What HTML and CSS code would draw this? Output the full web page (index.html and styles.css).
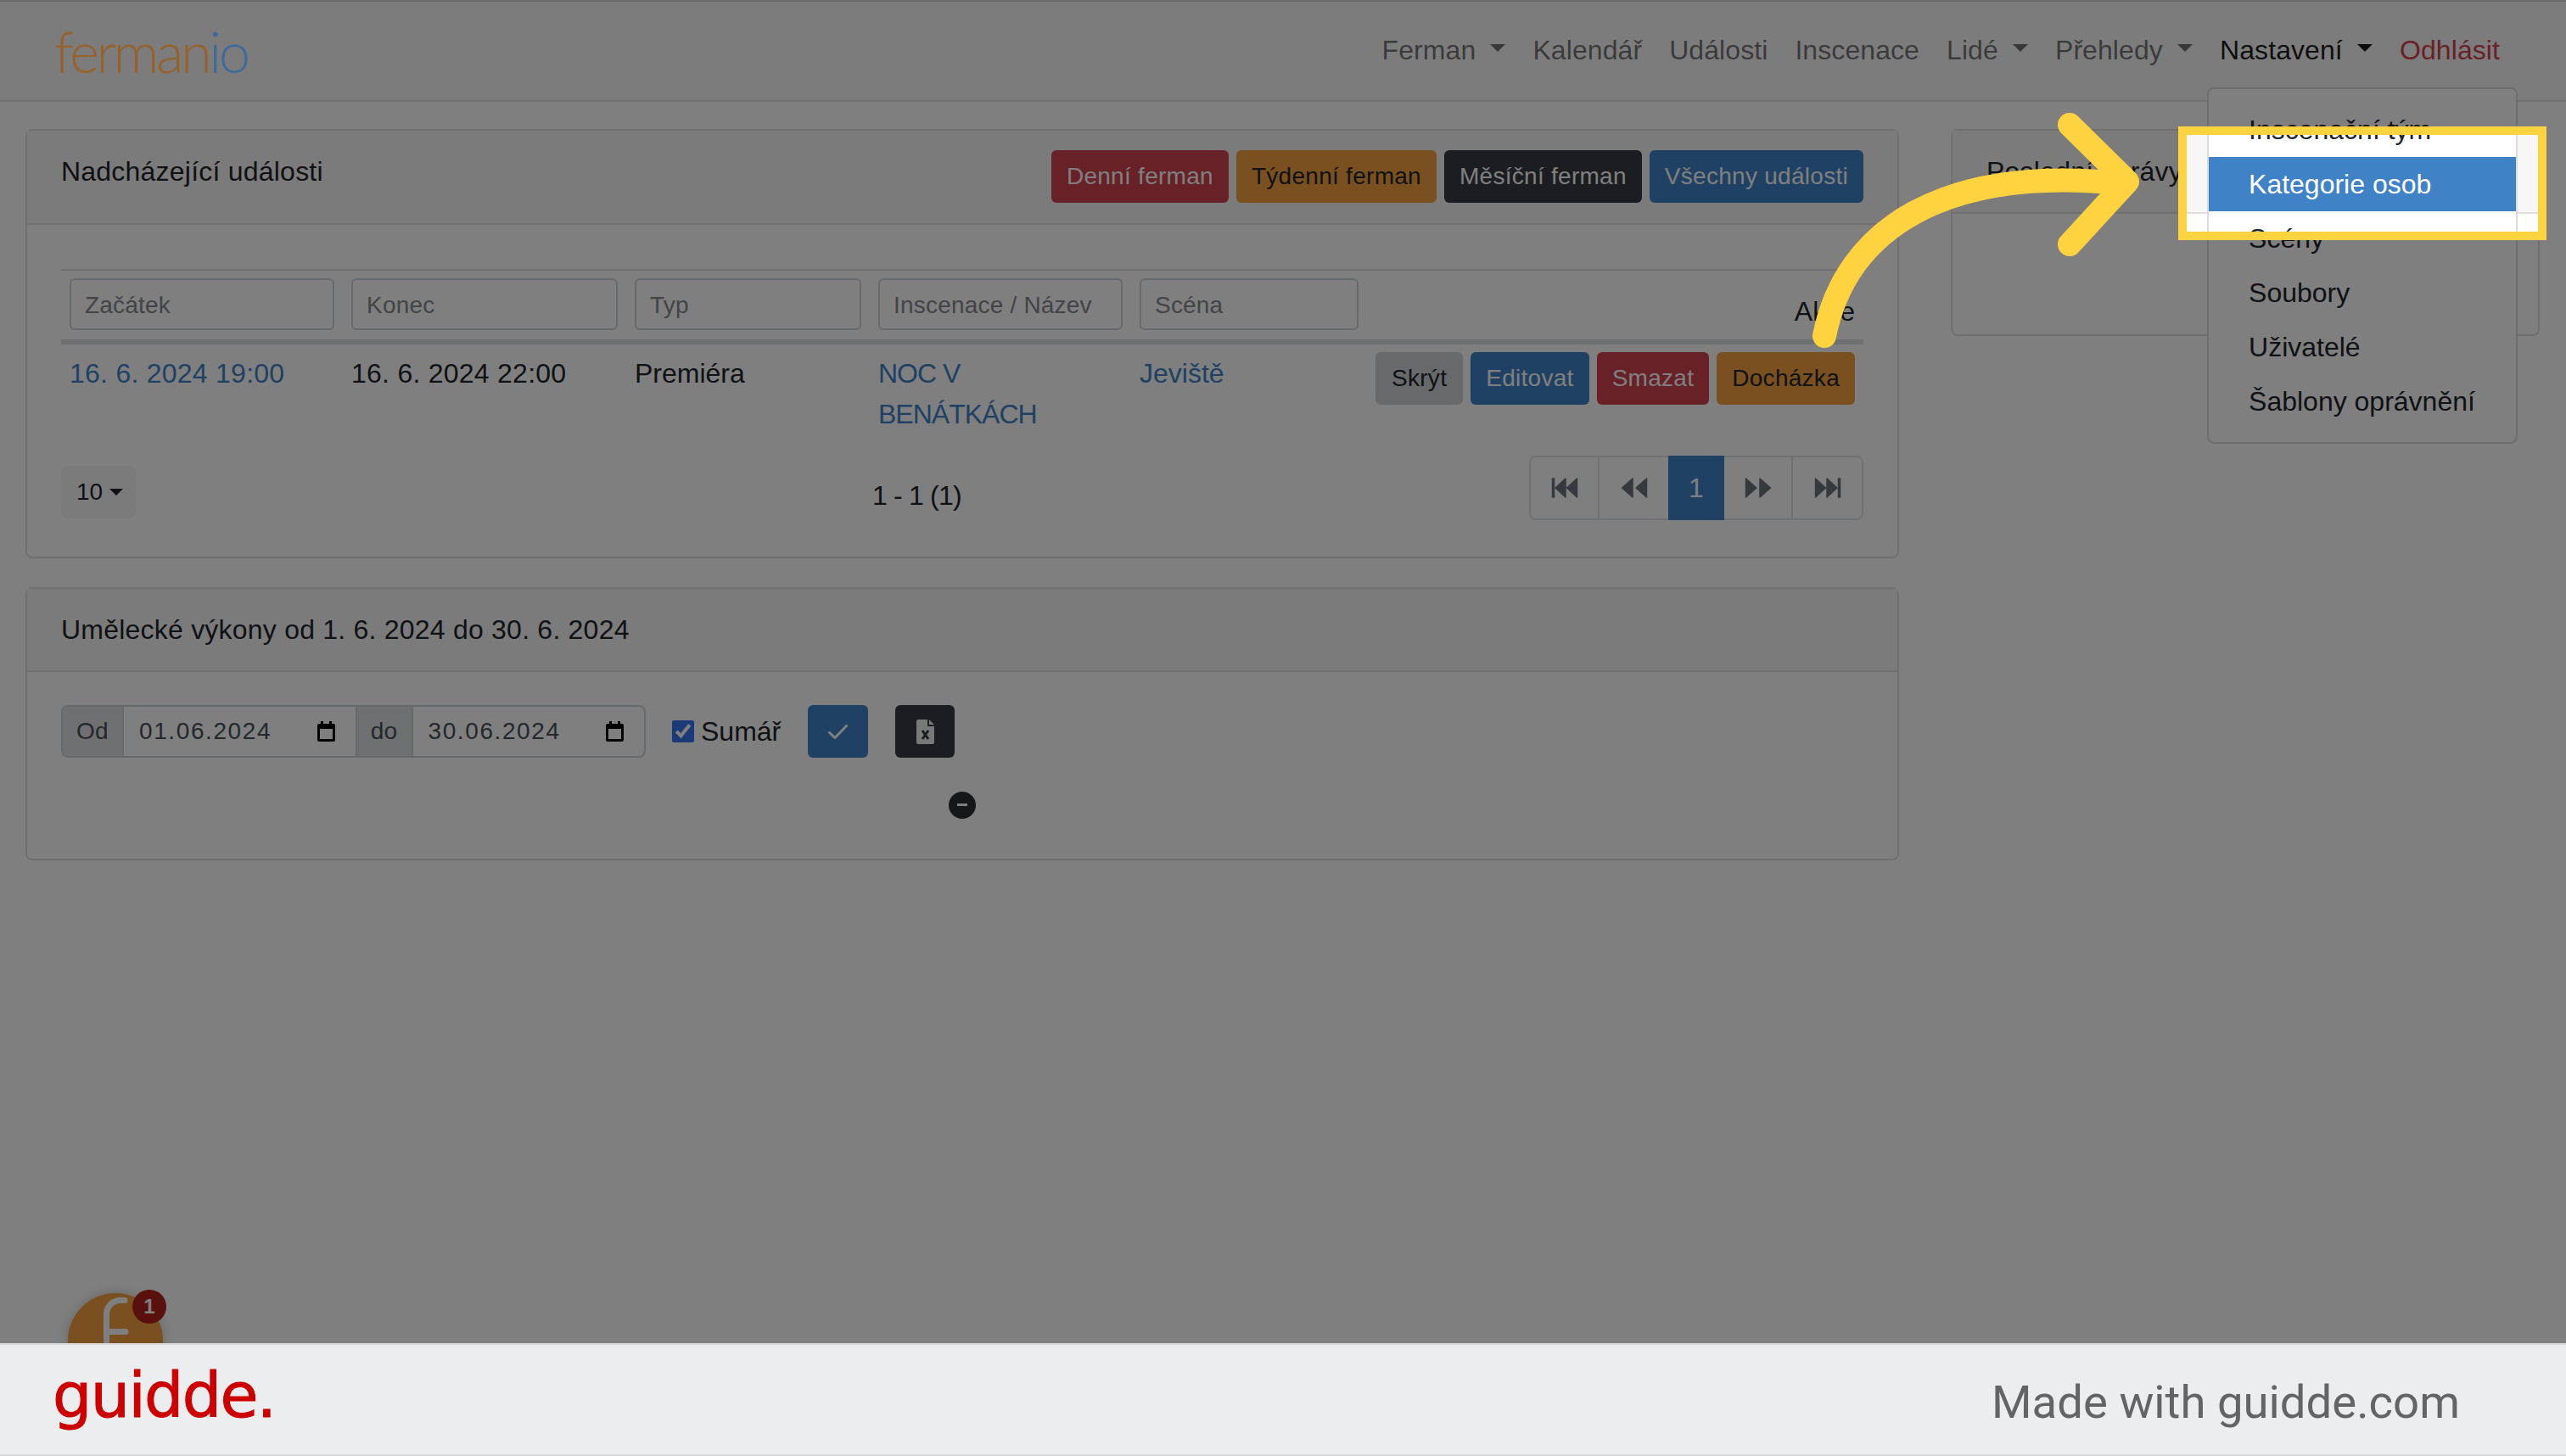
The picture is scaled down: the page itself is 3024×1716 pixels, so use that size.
FILE: index.html
```html
<!DOCTYPE html>
<html lang="en">
<head>
    <meta charset="UTF-8">
    <meta name="viewport" content="width=device-width, initial-scale=1.0">
    <title>Fermanio</title>
    <link rel="stylesheet" href="styles.css">
</head>
<body>
    <div class="page">
        <nav class="navbar">
            <a class="logo">ferman<span class="logo-io">io</span></a>
            <ul class="nav-list">
                <li><a class="nav-link">Ferman <span class="caret"></span></a></li>
                <li><a class="nav-link">Kalendář</a></li>
                <li><a class="nav-link">Události</a></li>
                <li><a class="nav-link">Inscenace</a></li>
                <li><a class="nav-link">Lidé <span class="caret"></span></a></li>
                <li><a class="nav-link">Přehledy <span class="caret"></span></a></li>
                <li class="nav-open">
                    <a class="nav-link nav-link-active">Nastavení <span class="caret"></span></a>
                    <div class="dropdown-menu">
                        <a class="dropdown-item">Inscenační tým</a>
                        <a class="dropdown-item dropdown-item-active">Kategorie osob</a>
                        <a class="dropdown-item">Scény</a>
                        <a class="dropdown-item">Soubory</a>
                        <a class="dropdown-item">Uživatelé</a>
                        <a class="dropdown-item">Šablony oprávnění</a>
                    </div>
                </li>
                <li><a class="nav-link nav-link-logout">Odhlásit</a></li>
            </ul>
        </nav>

        <main class="content">
            <div class="left-column">
                <section class="card">
                    <header class="card-header">
                        <span class="card-title">Nadcházející události</span>
                        <div class="btn-row">
                            <a class="btn btn-danger">Denní ferman</a>
                            <a class="btn btn-warning">Týdenní ferman</a>
                            <a class="btn btn-dark">Měsíční ferman</a>
                            <a class="btn btn-primary">Všechny události</a>
                        </div>
                    </header>
                    <div class="card-body events-body">
                        <table class="events-table">
                            <colgroup>
                                <col class="col-start">
                                <col class="col-end">
                                <col class="col-type">
                                <col class="col-name">
                                <col class="col-stage">
                                <col>
                            </colgroup>
                            <thead>
                                <tr>
                                    <th><input class="filter" placeholder="Začátek"></th>
                                    <th><input class="filter" placeholder="Konec"></th>
                                    <th><input class="filter" placeholder="Typ"></th>
                                    <th><input class="filter" placeholder="Inscenace / Název"></th>
                                    <th><input class="filter" placeholder="Scéna"></th>
                                    <th class="actions-head">Akce</th>
                                </tr>
                            </thead>
                            <tbody>
                                <tr>
                                    <td class="date-cell"><a class="link">16. 6. 2024 19:00</a></td>
                                    <td class="date-cell">16. 6. 2024 22:00</td>
                                    <td>Premiéra</td>
                                    <td class="name-cell"><a class="link">NOC V BENÁTKÁCH</a></td>
                                    <td><a class="link">Jeviště</a></td>
                                    <td class="actions-cell">
                                        <div class="btn-row btn-row-end">
                                            <a class="btn btn-light btn-hide">Skrýt</a>
                                            <a class="btn btn-primary">Editovat</a>
                                            <a class="btn btn-danger">Smazat</a>
                                            <a class="btn btn-warning">Docházka</a>
                                        </div>
                                    </td>
                                </tr>
                            </tbody>
                        </table>
                        <div class="table-footer">
                            <a class="page-size">10<span class="caret caret-small"></span></a>
                            <span class="page-count">1 - 1 (1)</span>
                            <div class="pagination">
                                <a class="page-item page-item-wide">
                                    <svg class="page-icon" viewBox="0 0 32 24"><path d="M1.500 1h2v22h-2zM5 12L17 1v22zM18.500 12L30.500 1v22z"/></svg>
                                </a>
                                <a class="page-item">
                                    <svg class="page-icon" viewBox="0 0 32 24"><path d="M1.500 12L14 1v22zM18 12L30.500 1v22z"/></svg>
                                </a>
                                <a class="page-item page-item-active">1</a>
                                <a class="page-item">
                                    <svg class="page-icon" viewBox="0 0 32 24"><path d="M1.500 1L14 12 1.500 23zM18 1L30.500 12 18 23z"/></svg>
                                </a>
                                <a class="page-item page-item-wide">
                                    <svg class="page-icon" viewBox="0 0 32 24"><path d="M1.500 1L13.500 12 1.500 23zM15 1L27 12 15 23zM28.500 1h2v22h-2z"/></svg>
                                </a>
                            </div>
                        </div>
                    </div>
                </section>

                <section class="card">
                    <header class="card-header">
                        <span class="card-title">Umělecké výkony od 1. 6. 2024 do 30. 6. 2024</span>
                    </header>
                    <div class="card-body report-body">
                        <form class="report-form">
                            <div class="input-group">
                                <span class="addon addon-from">Od</span>
                                <div class="date-field">
                                    <input class="date-input" value="01.06.2024">
                                    <svg class="calendar-icon" viewBox="0 0 21 24"><path d="M4 0h3v3h7V0h3v3h2a2 2 0 0 1 2 2v17a2 2 0 0 1-2 2H2a2 2 0 0 1-2-2V5a2 2 0 0 1 2-2h2zM3 9v12h15V9z"/></svg>
                                </div>
                                <span class="addon addon-to">do</span>
                                <div class="date-field">
                                    <input class="date-input" value="30.06.2024">
                                    <svg class="calendar-icon" viewBox="0 0 21 24"><path d="M4 0h3v3h7V0h3v3h2a2 2 0 0 1 2 2v17a2 2 0 0 1-2 2H2a2 2 0 0 1-2-2V5a2 2 0 0 1 2-2h2zM3 9v12h15V9z"/></svg>
                                </div>
                            </div>
                            <label class="sum-check"><input type="checkbox" checked>Sumář</label>
                            <a class="btn btn-primary btn-icon btn-confirm">
                                <svg class="check-icon" viewBox="0 0 25 18"><path d="M1.500 9.500l7.500 7L23.500 1.500"/></svg>
                            </a>
                            <a class="btn btn-dark btn-icon btn-export">
                                <svg class="file-icon" viewBox="0 0 21 29"><path class="file-sheet" d="M2 0h11v8h8v19a2 2 0 0 1-2 2H2a2 2 0 0 1-2-2V2a2 2 0 0 1 2-2zM15 0l6 6h-6z"/><path class="file-x" d="M7 13l7 10M14 13L7 23"/></svg>
                            </a>
                        </form>
                        <div class="spinner-row"><span class="collapse-dot"></span></div>
                    </div>
                </section>
            </div>

            <section class="card news-card">
                <header class="card-header">
                    <span class="card-title">Poslední zprávy</span>
                </header>
                <div class="card-body news-body"></div>
            </section>
        </main>

        <div class="chat-bubble">
            <svg class="chat-mark" viewBox="0 0 112 112"><path d="M67 8.500H62A16.500 16.500 0 0 0 45.500 25V112M45.500 45.500H68"/></svg>
            <span class="chat-badge">1</span>
        </div>

        <div class="spotlight"></div>
        <svg class="arrow" viewBox="0 0 3024 1583">
            <path d="M2150 396C2175 270 2290 195 2500 216M2439 147L2507 214 2439 288"/>
        </svg>
    </div>

    <footer class="footer">
        <span class="guidde-logo">guidde.</span>
        <span class="guidde-note">Made with guidde.com</span>
    </footer>
</body>
</html>
```

FILE: styles.css
```css
* {
    box-sizing: border-box;
}
body {
    margin: 0;
    width: 3024px;
    height: 1716px;
    overflow: hidden;
    font-family: "Liberation Sans", Arial, sans-serif;
    font-size: 32px;
    line-height: 48px;
    color: #212529;
    background-color: white;
}
a {
    text-decoration: none;
}

/* page under the dimming layer */
.page {
    position: relative;
    height: 1583px;
    overflow: hidden;
}

/* navbar */
.navbar {
    display: flex;
    justify-content: space-between;
    align-items: center;
    height: 120px;
    padding: 0 62px 0 64px;
    background-color: #f8f9fa;
    border-top: 2px solid #d4d4d4;
    border-bottom: 2px solid #e2e2e2;
}
.logo {
    position: relative;
    z-index: 11;
    font-family: Lato, sans-serif;
    font-weight: 300;
    font-size: 67px;
    line-height: 80px;
    letter-spacing: -3.500px;
    color: #96622a;
}
.logo-io {
    color: #3e6c9a;
}
.nav-list {
    display: flex;
    margin: -3px 0 0;
    padding: 0;
    list-style: none;
    letter-spacing: 0.080px;
}
.nav-link {
    display: block;
    padding: 8px 16px;
    color: rgba(0, 0, 0, 0.55);
    white-space: nowrap;
}
.nav-link-active {
    color: rgba(0, 0, 0, 0.9);
}
.nav-link-logout {
    color: #d0424c;
}
.caret {
    display: inline-block;
    margin-left: 0.255em;
    vertical-align: 0.255em;
    border-top: 0.3em solid;
    border-right: 0.3em solid transparent;
    border-left: 0.3em solid transparent;
}
.caret-small {
    margin-left: 8px;
    vertical-align: 5px;
    border-top-width: 8px;
    border-right-width: 8px;
    border-left-width: 8px;
}

/* settings menu */
.nav-open {
    position: relative;
}
.dropdown-menu {
    position: absolute;
    top: 76px;
    left: 1px;
    z-index: 5;
    width: 366px;
    padding: 16px 0;
    letter-spacing: 0;
    background-color: white;
    border: 2px solid #dcdcdc;
    border-radius: 8px;
}
.dropdown-item {
    display: block;
    padding: 8px 47px;
    color: #212529;
    white-space: nowrap;
}
.dropdown-item-active {
    color: white;
    background-color: #3f83c6;
}

/* main layout */
.content {
    display: grid;
    grid-template-columns: 2208px 694px;
    gap: 61px;
    align-items: start;
    padding: 32px 0 0 30px;
}
.left-column {
    display: flex;
    flex-direction: column;
    gap: 34px;
}
.card {
    background-color: white;
    border: 2px solid #dfdfdf;
    border-radius: 8px;
}
.card-header {
    display: flex;
    justify-content: space-between;
    align-items: flex-start;
    padding: 24px 40px;
    background-color: #f7f7f7;
    border-bottom: 2px solid #dfdfdf;
}
.card-title {
    letter-spacing: 0.220px;
}
.card-body {
    padding: 40px;
}

/* buttons */
.btn-row {
    display: flex;
    gap: 9px;
    margin-top: -1px;
}
.btn-row-end {
    justify-content: flex-end;
    margin-top: 0;
}
.btn {
    display: block;
    padding: 8px 16px;
    font-size: 28px;
    line-height: 42px;
    letter-spacing: 0.280px;
    color: white;
    border: 2px solid transparent;
    border-radius: 6px;
    white-space: nowrap;
}
.btn-danger {
    background-color: #d0424c;
}
.btn-warning {
    color: #212529;
    background-color: #f4a040;
}
.btn-dark {
    background-color: #363a40;
}
.btn-primary {
    background-color: #3f83c6;
}
.btn-light {
    color: #212529;
    background-color: #d0d2d6;
}
.btn-hide {
    width: 104px;
    text-align: center;
}
.btn-icon {
    display: flex;
    justify-content: center;
    align-items: center;
    height: 62px;
    padding: 0;
}

/* events table */
.events-body {
    padding-top: 52px;
    padding-bottom: 43px;
}
.events-table {
    width: 100%;
    border-collapse: collapse;
    table-layout: fixed;
}
.col-start {
    width: 332px;
}
.col-end {
    width: 334px;
}
.col-type {
    width: 287px;
}
.col-name {
    width: 308px;
}
.col-stage {
    width: 278px;
}
.events-table th {
    padding: 9px 10px 11px;
    font-weight: 400;
    text-align: left;
    vertical-align: bottom;
    border-top: 2px solid #dee2e6;
    border-bottom: 6px solid #dfe1e5;
}
.events-table th.actions-head {
    padding-bottom: 9px;
    text-align: right;
}
.events-table td {
    padding: 10px;
    vertical-align: top;
}
.events-table td.date-cell {
    letter-spacing: 0.250px;
}
.events-table td.name-cell {
    letter-spacing: -1px;
}
.events-table td.actions-cell {
    padding-top: 9px;
}
.filter {
    display: block;
    width: 100%;
    height: 61px;
    padding: 2px 16px 0;
    font-family: inherit;
    font-size: 28px;
    letter-spacing: 0.200px;
    color: #495057;
    background-color: white;
    border: 2px solid #ced4da;
    border-radius: 6px;
}
.filter::placeholder {
    color: #84888c;
    opacity: 1;
}
.link {
    color: #3f83c6;
}
.table-footer {
    display: flex;
    align-items: flex-start;
    margin-top: 15px;
}
.page-size {
    display: block;
    width: 88px;
    height: 62px;
    margin-top: 12px;
    padding: 7px 0 0 18px;
    font-size: 28px;
    color: #212529;
    background-color: #f6f7f9;
    border-radius: 8px;
}
.page-count {
    margin-top: 23px;
    margin-left: 868px;
    letter-spacing: -0.800px;
}
.pagination {
    display: flex;
    height: 76px;
    margin-left: auto;
    border: 2px solid #dee2e6;
    border-radius: 8px;
}
.page-item {
    display: flex;
    justify-content: center;
    align-items: center;
    width: 81px;
    border-right: 2px solid #dee2e6;
}
.page-item:last-child {
    border-right: none;
}
.page-item-active {
    width: 66px;
    margin: -2px 0;
    color: white;
    background-color: #3f83c6;
    border-right: none;
}
.page-item:has(+ .page-item-active) {
    border-right: none;
}
.page-icon {
    width: 32px;
    height: 24px;
    fill: #6c757d;
    stroke: #6c757d;
    stroke-width: 1.500px;
    stroke-linejoin: round;
}

/* report form */
.report-body {
    padding-top: 39px;
    padding-bottom: 47px;
}
.report-form {
    display: flex;
    align-items: center;
}
.input-group {
    display: flex;
    width: 689px;
    height: 62px;
    border: 2px solid #ced4da;
    border-radius: 8px;
    overflow: hidden;
}
.addon {
    display: flex;
    justify-content: center;
    align-items: center;
    font-size: 28px;
    letter-spacing: 0.300px;
    color: #495057;
    background-color: #dfe1e5;
}
.addon-from {
    width: 72px;
    border-right: 2px solid #ced4da;
}
.addon-to {
    width: 68px;
    border-left: 2px solid #ced4da;
    border-right: 2px solid #ced4da;
}
.date-field {
    display: flex;
    align-items: center;
    flex: 1;
    padding: 0 24px 0 18px;
}
.date-input {
    flex: 1;
    width: 100%;
    padding: 0;
    font-family: inherit;
    font-size: 28px;
    letter-spacing: 1.600px;
    color: #495057;
    border: none;
    background: none;
}
.calendar-icon {
    flex-shrink: 0;
    width: 21px;
    height: 24px;
    fill: black;
}
.sum-check {
    display: flex;
    align-items: center;
    margin-left: 31px;
    height: 62px;
}
.sum-check input {
    width: 26px;
    height: 26px;
    margin: 0 8px 0 0;
    accent-color: #3874f0;
}
.btn-confirm {
    width: 71px;
    margin-left: 32px;
}
.btn-export {
    width: 70px;
    margin-left: 32px;
}
.check-icon {
    width: 25px;
    height: 18px;
    fill: none;
    stroke: white;
    stroke-width: 3px;
}
.file-icon {
    width: 21px;
    height: 29px;
}
.file-sheet {
    fill: #f2f2f2;
}
.file-x {
    fill: none;
    stroke: #363a40;
    stroke-width: 3px;
}
.spinner-row {
    display: flex;
    justify-content: center;
    margin-top: 40px;
}
.collapse-dot {
    position: relative;
    width: 32px;
    height: 32px;
    background-color: #2a2e33;
    border-radius: 50%;
}
.collapse-dot::after {
    content: "";
    position: absolute;
    top: 14px;
    left: 10px;
    width: 12px;
    height: 3px;
    background-color: white;
}

/* right card */
.news-body {
    height: 142px;
}

/* floating chat button */
.chat-bubble {
    position: absolute;
    top: 1524px;
    left: 80px;
    z-index: 5;
    width: 112px;
    height: 112px;
    background-color: #f4a040;
    border-radius: 50%;
    box-shadow: 0 0 16px rgba(0, 0, 0, 0.2);
}
.chat-mark {
    position: absolute;
    top: 0;
    left: 0;
    width: 112px;
    height: 112px;
    fill: none;
    stroke: white;
    stroke-width: 7px;
    stroke-linecap: round;
}
.chat-badge {
    position: absolute;
    top: -4px;
    left: 76px;
    display: flex;
    justify-content: center;
    align-items: center;
    width: 40px;
    height: 40px;
    font-size: 24px;
    font-weight: 700;
    color: white;
    background-color: #b4201a;
    border-radius: 50%;
}

/* tutorial highlight */
.spotlight {
    position: absolute;
    top: 149px;
    left: 2567px;
    z-index: 10;
    width: 434px;
    height: 134px;
    border: 10px solid #ffd23f;
    box-shadow: 0 0 0 4000px rgba(0, 0, 0, 0.5);
}
.arrow {
    position: absolute;
    top: 0;
    left: 0;
    z-index: 11;
    width: 3024px;
    height: 1583px;
    fill: none;
    stroke: #ffd23f;
    stroke-width: 28px;
    stroke-linecap: round;
    stroke-linejoin: round;
}

/* guidde strip */
.footer {
    display: flex;
    justify-content: space-between;
    align-items: center;
    height: 133px;
    padding: 0 125px 0 62px;
    background-color: #ecedef;
    border-top: 2px solid #d8d8d8;
    border-bottom: 2px solid #d8d8d8;
}
.guidde-logo {
    margin-top: -10px;
    font-family: "DejaVu Sans", sans-serif;
    font-size: 73px;
    letter-spacing: -1.600px;
    color: #cc0000;
    -webkit-text-stroke: 1px #cc0000;
}
.guidde-note {
    margin-top: 4px;
    font-family: Roboto, sans-serif;
    font-size: 54.500px;
    color: #636466;
}
```
